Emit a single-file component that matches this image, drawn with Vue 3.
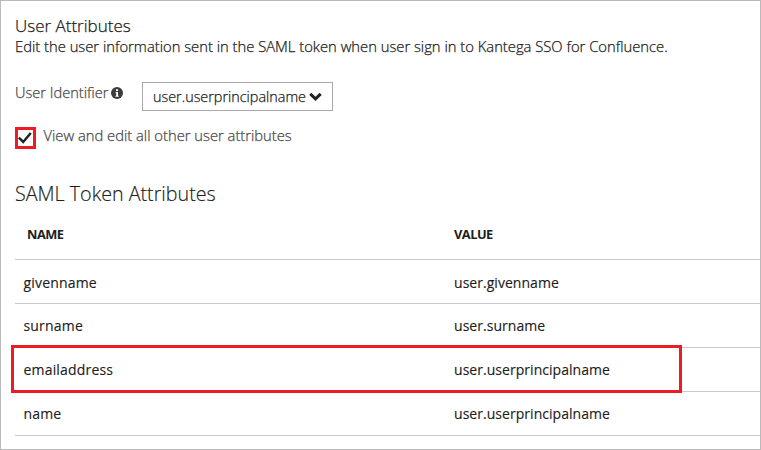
<script setup>
const rows = [
  { name: 'givenname', value: 'user.givenname' },
  { name: 'surname', value: 'user.surname' },
  { name: 'emailaddress', value: 'user.userprincipalname', marked: true },
  { name: 'name', value: 'user.userprincipalname' },
]
</script>

<template>
  <main class="panel">
    <h2 class="title">User Attributes</h2>
    <p class="intro">Edit the user information sent in the SAML token when user sign in to Kantega SSO for Confluence.</p>

    <div class="identifier">
      <span class="label">User Identifier</span>
      <svg class="info" width="12" height="12" viewBox="0 0 12 12">
        <circle cx="6" cy="6" r="6" fill="#3c3c3c" />
        <path d="M5 2.2h2v1.7H5zM4.6 5H7v3.8h.7v.9H4.4v-.9h.8V5.9h-.6z" fill="#fff" />
      </svg>
      <button class="select">
        <span>user.userprincipalname</span>
        <svg width="13" height="9" viewBox="0 0 13 9">
          <path d="M1.3 1.8 6.5 6.8 11.7 1.8" fill="none" stroke="#222" stroke-width="3" />
        </svg>
      </button>
    </div>

    <label class="toggle">
      <span class="check">
        <svg width="15" height="16" viewBox="0 0 15 16">
          <path d="M.8 7.6 5.2 12 12.8 3" fill="none" stroke="#222" stroke-width="2.5" />
        </svg>
      </span>
      <span class="toggle-text">View and edit all other user attributes</span>
    </label>

    <h3 class="subtitle">SAML Token Attributes</h3>

    <section class="table">
      <div class="row head"><span>NAME</span><span>VALUE</span></div>
      <div v-for="row in rows" :key="row.name" class="row" :class="{ marked: row.marked }">
        <span class="name">{{ row.name }}</span><span class="value">{{ row.value }}</span>
      </div>
    </section>
  </main>
</template>

<style>
body {
  margin: 0;
  background: #fff;
}
</style>

<style scoped>
.panel {
  box-sizing: border-box;
  width: 761px;
  height: 450px;
  padding: 15px 0 0 14px;
  border: 1px solid #bababa;
  overflow: hidden;
  font-family: 'Open Sans', 'Noto Sans', sans-serif;
  font-size: 14.6px;
  font-weight: 300;
  color: #202020;
  white-space: nowrap;
  -webkit-text-stroke: .25px currentColor;
}
h2, h3, p {
  margin: 0;
}
.title {
  font-size: 17px;
  font-weight: 300;
  line-height: 20px;
}
.intro {
  font-size: 14.78px;
  line-height: 20px;
}
.identifier {
  display: flex;
  align-items: flex-start;
  height: 29px;
  margin-top: 26px;
}
.label {
  width: 96px;
  line-height: 20px;
  color: #484848;
}
.info {
  margin-top: 5px;
}
.select {
  box-sizing: border-box;
  display: flex;
  align-items: center;
  gap: 4px;
  width: 191px;
  height: 29px;
  margin-left: 19px;
  padding: 0 0 0 10px;
  border: 1px solid #aaa;
  background: #fff;
  font: inherit;
  font-size: 14.4px;
  color: #202020;
  text-align: left;
}
.select span {
  width: 152px;
  line-height: 27px;
}
.toggle {
  display: flex;
  height: 22px;
  margin-top: 16px;
}
.check {
  width: 15px;
  height: 16px;
  border: 3px solid #ed1c24;
}
.check svg {
  display: block;
}
.toggle-text {
  margin-left: 7.5px;
  font-size: 14.75px;
  line-height: 16px;
  color: #484848;
}
.subtitle {
  padding-top: 1px;
  margin-top: 30px;
  font-size: 19.7px;
  font-weight: 300;
  line-height: 28px;
  -webkit-text-stroke-width: .15px;
}
.table {
  margin-top: 1px;
}
.row {
  position: relative;
  box-sizing: border-box;
  display: grid;
  grid-template-columns: 431px 1fr;
  height: 44px;
  border-bottom: 1px solid #c8c8c8;
  padding: 0 0 0 8px;
  font-size: 14px;
  font-weight: 400;
  line-height: 44px;
  -webkit-text-stroke-width: .12px;
}
.head + .row {
  padding-top: 1px;
}
.name {
  padding-left: .5px;
  letter-spacing: .18px;
}
.value {
  letter-spacing: .04px;
}
.head {
  height: 51px;
  padding: 0 0 0 12px;
  grid-template-columns: 427px 1fr;
  font-size: 12.8px;
  font-weight: 700;
  line-height: 50px;
  letter-spacing: -.5px;
  -webkit-text-stroke-width: 0;
}
.marked::after {
  content: '';
  position: absolute;
  z-index: 1;
  box-sizing: border-box;
  top: -3px;
  left: -4px;
  width: 671px;
  height: 48px;
  border: 3px solid #ed1c24;
}
</style>
